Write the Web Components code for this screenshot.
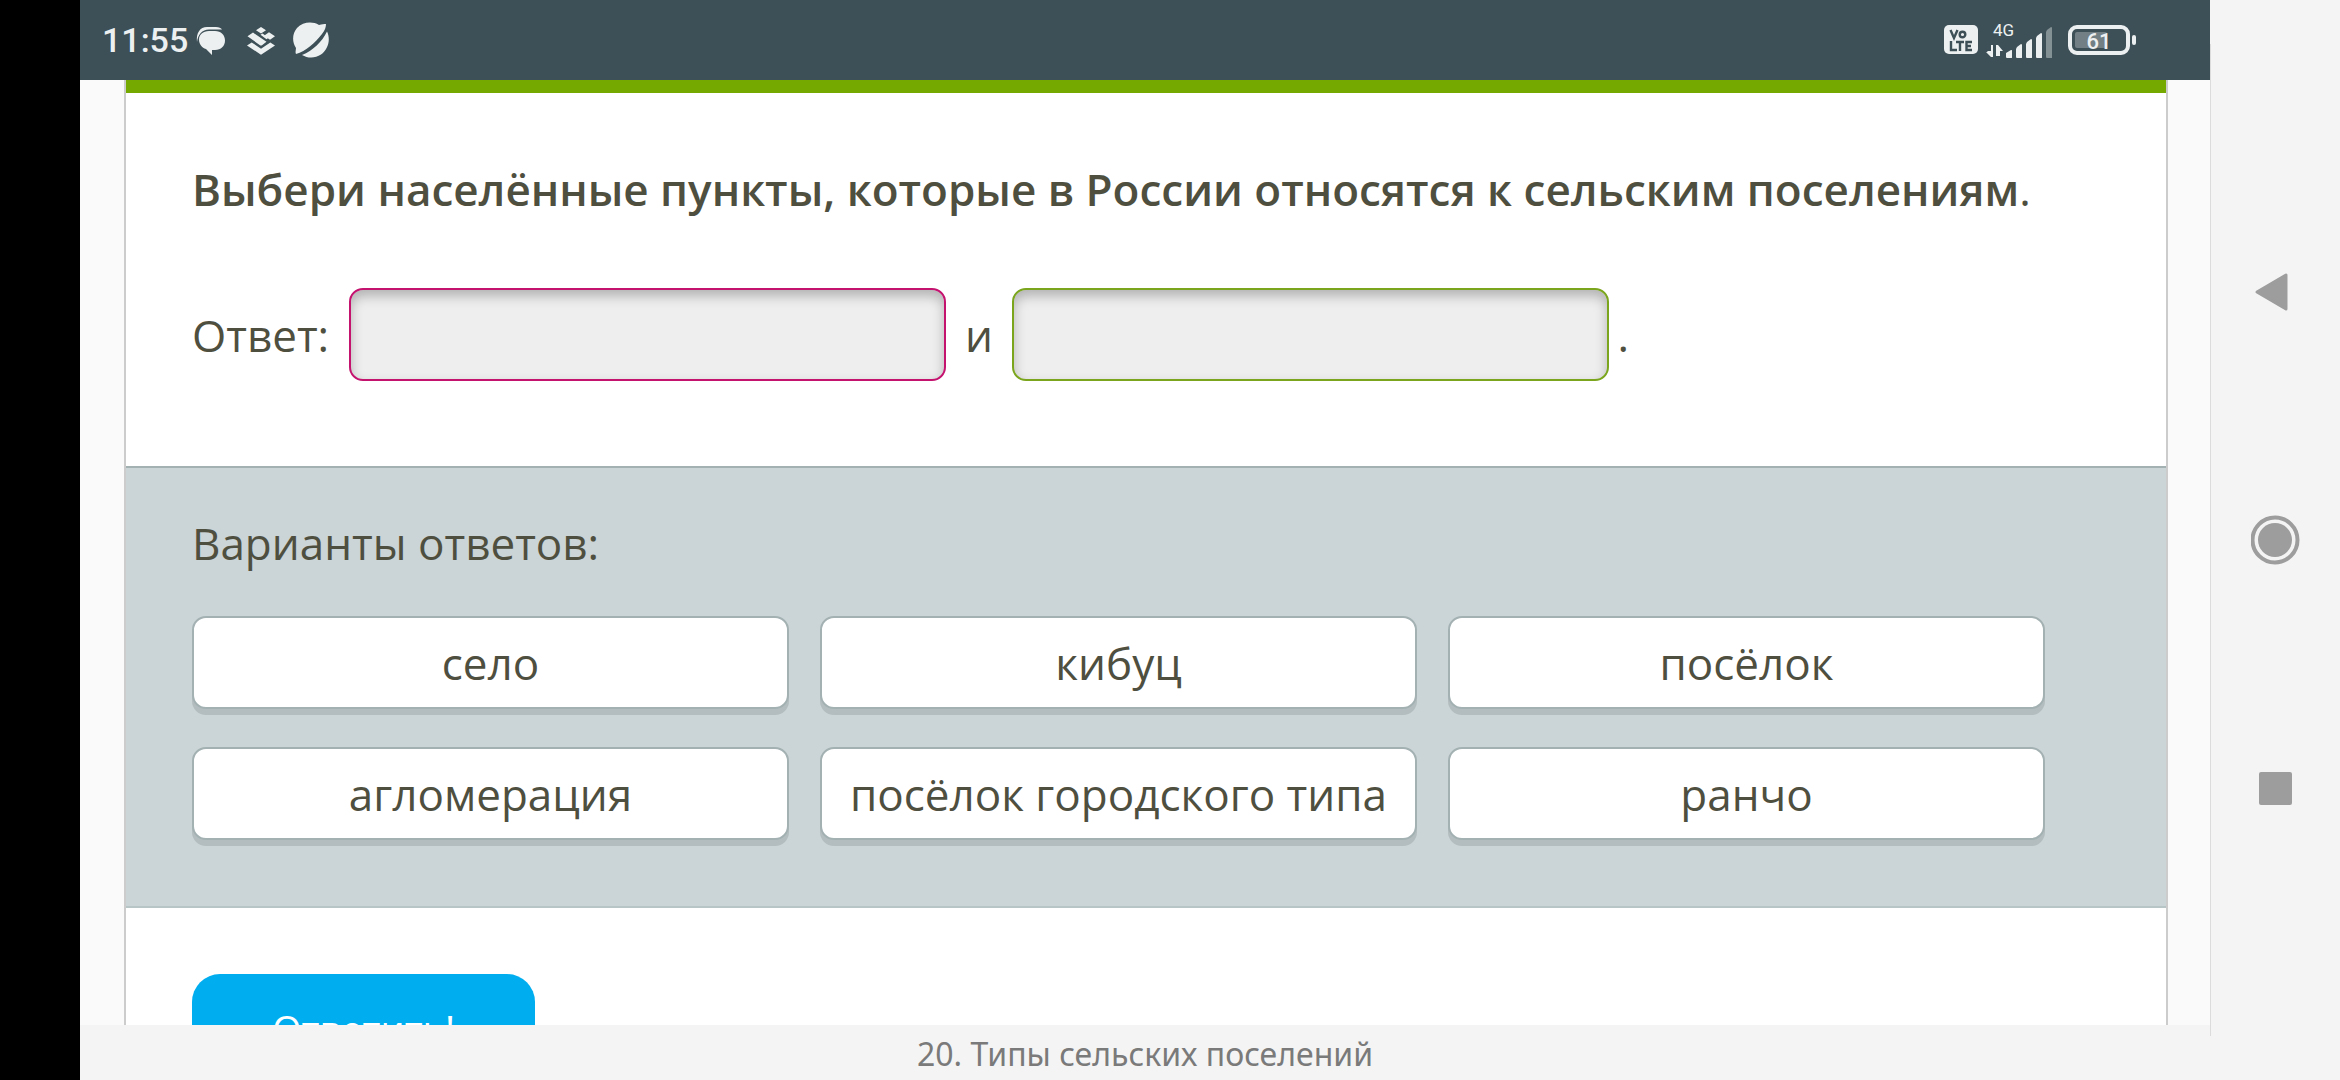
<!DOCTYPE html>
<html lang="ru">
<head>
<meta charset="utf-8">
<meta name="viewport" content="width=device-width, initial-scale=1">
<title>20. Типы сельских поселений</title>
<style>
  body {
    margin: 0;
    background: #000;
    color: #4f4f3f;
    font-family: "Open Sans", "Noto Sans", sans-serif;
    font-size: 44px;
    line-height: 60px;
  }
</style>
</head>
<body>

<phone-shell>
  <status-bar slot="status" time="11:55" battery="61"></status-bar>
  <task-card>
    <task-question slot="question">Выбери населённые пункты, которые в России относятся к сельским поселениям</task-question>
    <answer-row slot="question">
      <span>Ответ: </span>
      <drop-field color="#c4126f" label="Ответ 1"></drop-field>
      <span> и </span>
      <drop-field color="#7aa51c" label="Ответ 2"></drop-field>
      <span>.</span>
    </answer-row>
    <answer-options slot="options" heading="Варианты ответов:">
      <answer-chip>село</answer-chip>
      <answer-chip>кибуц</answer-chip>
      <answer-chip>посёлок</answer-chip>
      <answer-chip>агломерация</answer-chip>
      <answer-chip>посёлок городского типа</answer-chip>
      <answer-chip>ранчо</answer-chip>
    </answer-options>
    <submit-button slot="actions">Ответить!</submit-button>
  </task-card>
  <page-caption slot="caption">20. Типы сельских поселений</page-caption>
  <nav-keys slot="nav"></nav-keys>
</phone-shell>

<template id="phone-shell-template">
  <style>
    :host {
      display: flex;
      height: 100vh;
      padding-left: 80px;
      box-sizing: border-box;
      overflow: hidden;
      background: #000;
    }
    .screen {
      flex: 1;
      min-width: 0;
      display: flex;
      flex-direction: column;
      background: #fafafa;
    }
    main {
      flex: 1;
      min-height: 0;
      overflow: hidden;
      padding: 0 42px 0 44px;
    }
  </style>
  <div class="screen">
    <slot name="status"></slot>
    <main><slot></slot></main>
    <slot name="caption"></slot>
  </div>
  <slot name="nav"></slot>
</template>

<template id="status-bar-template">
  <style>
    :host {
      display: flex;
      align-items: center;
      height: 80px;
      padding: 0 74px 0 22px;
      background: #3d5057;
      color: #edf0f1;
      font-family: Roboto, sans-serif;
    }
    svg { display: block; fill: #edf0f1; }
    time { margin-right: 8px; font-size: 34px; font-weight: 500; line-height: 40px; }
    .left, .right, .notices { display: flex; align-items: center; }
    .left { flex: 1; }
    .notices { gap: 16px; }
    .right { gap: 12px; }
    text { font-family: Roboto, sans-serif; }
  </style>
  <div class="left">
    <time></time>
    <div class="notices">
      <!-- messages -->
      <svg width="34" height="32" viewBox="0 0 34 32">
        <path d="M1 18C0 9 4 3 11 3h9c3 0 5 1 6 2.500H13C6 6 2 10 1 18z"/>
        <path d="M13 7h6c6 0 10 4 10 9.500S25 26 19 26h-3v5l-6-6C6 24 3 20 3 15.500 3 11 7 7 13 7z"/>
      </svg>
      <!-- stacked tiles -->
      <svg width="30" height="30" viewBox="0 0 30 30">
        <path d="M15 2l5 3.300-5 3.200-5-3.200zM23 7.300l6 4-5 3.500-6-4zM7 7.600l13.500 9.200-4.500 3.400c-.600.400-1.400.400-2 0L1.500 11.300z"/>
        <path d="M1 20.500l4.700-3 9.300 6.200 9.300-6.200 4.700 3-14 9.200zM14.500 9.800l2-1.200 6 4.200-2 1.400z" fill-rule="evenodd"/>
      </svg>
      <!-- planet -->
      <svg width="38" height="36" viewBox="0 0 38 36">
        <path d="M4 32c-1-2 0-4 0-6C0 20 0 12 5 6 11 0 20-1 27 3c3-1 5-1 7-1 0 3-1 6-4 10C23 21 14 29 4 32z"/>
        <path d="M35 9.500c4 8 1 18-6 23-6 4-13 4-19 .500C21 28.500 30 20 35 9.500z"/>
      </svg>
    </div>
  </div>
  <div class="right">
    <svg width="34" height="30" viewBox="0 0 34 30">
      <rect y="0" width="34" height="29" rx="5"/>
      <g fill="none" stroke="#3d5057" stroke-width="2.400">
        <path d="M6.500 5l3.500 8 3.500-8"/><circle cx="18.500" cy="9.500" r="2.800"/>
        <path d="M7 16v9h6M12 17h8M16 17v9M28 17h-5.500v8H28M22.500 21H27"/>
      </g>
    </svg>
    <svg width="66" height="36" viewBox="3 0 66 36" overflow="visible">
      <text x="6" y="14" font-size="17">4G</text>
      <path d="M4 23h2v12H4l-5-5h5zM0 29h4v5zM9 23h2l5 6h-3v5H9z"/>
      <path d="M19 31l5-3c1 0 1 0 1 1v6c0 1 0 1-1 1h-4c-1 0-1-1-1-1zM30 25l4-3c1 0 1 1 1 1v12c0 1 0 1-1 1h-4c-1 0-1-1-1-1v-8zM40 20l4-3c1 0 1 1 1 1v17c0 1 0 1-1 1h-4c-1 0-1-1-1-1V22zM50 14l4-3c1 0 1 1 1 1v23c0 1 0 1-1 1h-4c-1 0-1-1-1-1V16z"/>
      <path opacity=".400" d="M60 8l4-3c1 0 1 1 1 1v29c0 1 0 1-1 1h-4c-1 0-1-1-1-1V10z"/>
    </svg>
    <svg width="68" height="30" viewBox="0 0 68 30">
      <rect x="2" y="2" width="58" height="26" rx="7" fill="none" stroke="#edf0f1" stroke-width="4"/>
      <rect x="7" y="7" width="32" height="16" rx="2" opacity=".300"/>
      <rect x="64" y="10" width="4" height="10" rx="2"/>
      <text class="charge" x="31" y="24" font-size="22" font-weight="500" text-anchor="middle"></text>
    </svg>
  </div>
</template>

<template id="task-card-template">
  <style>
    :host {
      display: block;
      min-height: 100%;
      box-sizing: border-box;
      border: solid #ccc;
      border-width: 0 2px;
      background: #fff;
    }
    .stripe { height: 13px; background: #76a900; }
    .question { padding: 66px 66px 85px; }
    .actions { padding: 66px; }
  </style>
  <div class="stripe"></div>
  <div class="question"><slot name="question"></slot></div>
  <slot name="options"></slot>
  <div class="actions"><slot name="actions"></slot></div>
</template>

<template id="task-question-template">
  <style>
    :host { display: block; margin-bottom: 69px; }
    p { margin: 0; }
    strong { font-weight: 600; }
  </style>
  <p><strong><slot></slot></strong>.</p>
</template>

<template id="answer-row-template">
  <style>
    :host { display: flex; align-items: center; gap: 8px; }
    ::slotted(span) { white-space: pre; }
  </style>
  <slot></slot>
</template>

<template id="drop-field-template">
  <style>
    :host { display: block; flex: 0 1 597px; min-width: 0; }
    input {
      display: block;
      width: 100%;
      height: 93px;
      box-sizing: border-box;
      padding: 0 28px;
      border: 2px solid var(--edge);
      border-radius: 14px;
      background: #eee;
      box-shadow: inset 0 6px 12px rgba(0, 0, 0, .25);
      color: inherit;
      font: inherit;
      text-align: center;
    }
  </style>
  <input type="text" readonly>
</template>

<template id="answer-options-template">
  <style>
    :host {
      display: block;
      padding: 45px 66px 66px;
      border: solid #a3b1b3;
      border-width: 2px 0;
      border-bottom-color: #b8c5c7;
      background: #cbd4d6;
    }
    h2 { margin: 0 0 43px; font: inherit; }
    .grid {
      display: grid;
      grid-template-columns: repeat(3, minmax(0, 597px));
      gap: 38px 31px;
    }
  </style>
  <h2></h2>
  <div class="grid"><slot></slot></div>
</template>

<template id="answer-chip-template">
  <style>
    :host { display: block; }
    button {
      display: block;
      width: 100%;
      min-height: 93px;
      padding: 0 20px;
      border: 2px solid #a3b1b3;
      border-radius: 14px;
      background: #fff;
      box-shadow: 0 6px 0 #b3bdbf;
      color: inherit;
      font: inherit;
      cursor: pointer;
    }
  </style>
  <button type="button"><slot></slot></button>
</template>

<template id="submit-button-template">
  <style>
    :host { display: block; }
    button {
      padding: 28px 80px 32px;
      border: 0;
      border-radius: 28px;
      background: #00aeef;
      color: #fff;
      font-family: inherit;
      font-size: 38px;
      line-height: 54px;
      cursor: pointer;
    }
  </style>
  <button type="submit"><slot></slot></button>
</template>

<template id="page-caption-template">
  <style>
    :host {
      display: block;
      padding: 7px 0 4px;
      background: #f4f4f4;
      color: #7a7a7a;
      font-family: "Noto Sans", sans-serif;
      font-size: 32px;
      line-height: 44px;
      text-align: center;
    }
  </style>
  <slot></slot>
</template>

<template id="nav-keys-template">
  <style>
    :host {
      flex: 0 0 130px;
      display: flex;
      box-sizing: border-box;
      padding: 44px 0;
      background: #f4f4f4;
    }
    nav {
      flex: 1;
      display: flex;
      flex-direction: column;
      align-items: center;
      justify-content: center;
      gap: 198px;
      border-left: 1px solid #dcdcdc;
    }
    button { display: block; padding: 0; border: 0; background: none; cursor: pointer; }
    svg { display: block; fill: #9d9d9d; }
  </style>
  <nav>
    <button type="button" aria-label="Назад">
      <svg width="50" height="50" viewBox="1 0 50 50"><path d="M7 25L36 8v34z" stroke="#9d9d9d" stroke-width="3" stroke-linejoin="round"/></svg>
    </button>
    <button type="button" aria-label="Домой">
      <svg width="50" height="50" viewBox="1 0 50 50"><circle cx="25" cy="25" r="17"/><circle cx="25" cy="25" r="22.500" fill="none" stroke="#9d9d9d" stroke-width="4"/></svg>
    </button>
    <button type="button" aria-label="Недавние">
      <svg width="50" height="50" viewBox="1 0 50 50"><rect x="9" y="9" width="33" height="33" rx="2"/></svg>
    </button>
  </nav>
</template>

<script>
  // base class: clones the template named after the tag into the shadow root
  class TemplateElement extends HTMLElement {
    constructor() {
      super();
      this.shadow = this.attachShadow({mode: 'open'});
      var template = document.querySelector('#' + this.localName + '-template');
      this.shadow.appendChild(template.content.cloneNode(true));
    }
  }

  class StatusBar extends TemplateElement {
    static get observedAttributes() { return ['time', 'battery']; }

    attributeChangedCallback(attr, oldValue, newValue) {
      var target = attr == 'time' ? 'time' : '.charge';
      this.shadow.querySelector(target).textContent = newValue;
    }
  }

  class DropField extends TemplateElement {
    static get observedAttributes() { return ['color', 'label']; }

    attributeChangedCallback(attr, oldValue, newValue) {
      var input = this.shadow.querySelector('input');
      if (attr == 'color') {
        input.style.setProperty('--edge', newValue);
      } else {
        input.setAttribute('aria-label', newValue);
      }
    }
  }

  class AnswerOptions extends TemplateElement {
    static get observedAttributes() { return ['heading']; }

    attributeChangedCallback(attr, oldValue, newValue) {
      this.shadow.querySelector('h2').textContent = newValue;
    }
  }

  // register elements
  customElements.define('status-bar', StatusBar);
  customElements.define('drop-field', DropField);
  customElements.define('answer-options', AnswerOptions);

  // the rest only need their template
  ['phone-shell', 'task-card', 'task-question', 'answer-row', 'answer-chip',
   'submit-button', 'page-caption', 'nav-keys'].forEach(function(name) {
    customElements.define(name, class extends TemplateElement {});
  });
</script>
</body>
</html>
